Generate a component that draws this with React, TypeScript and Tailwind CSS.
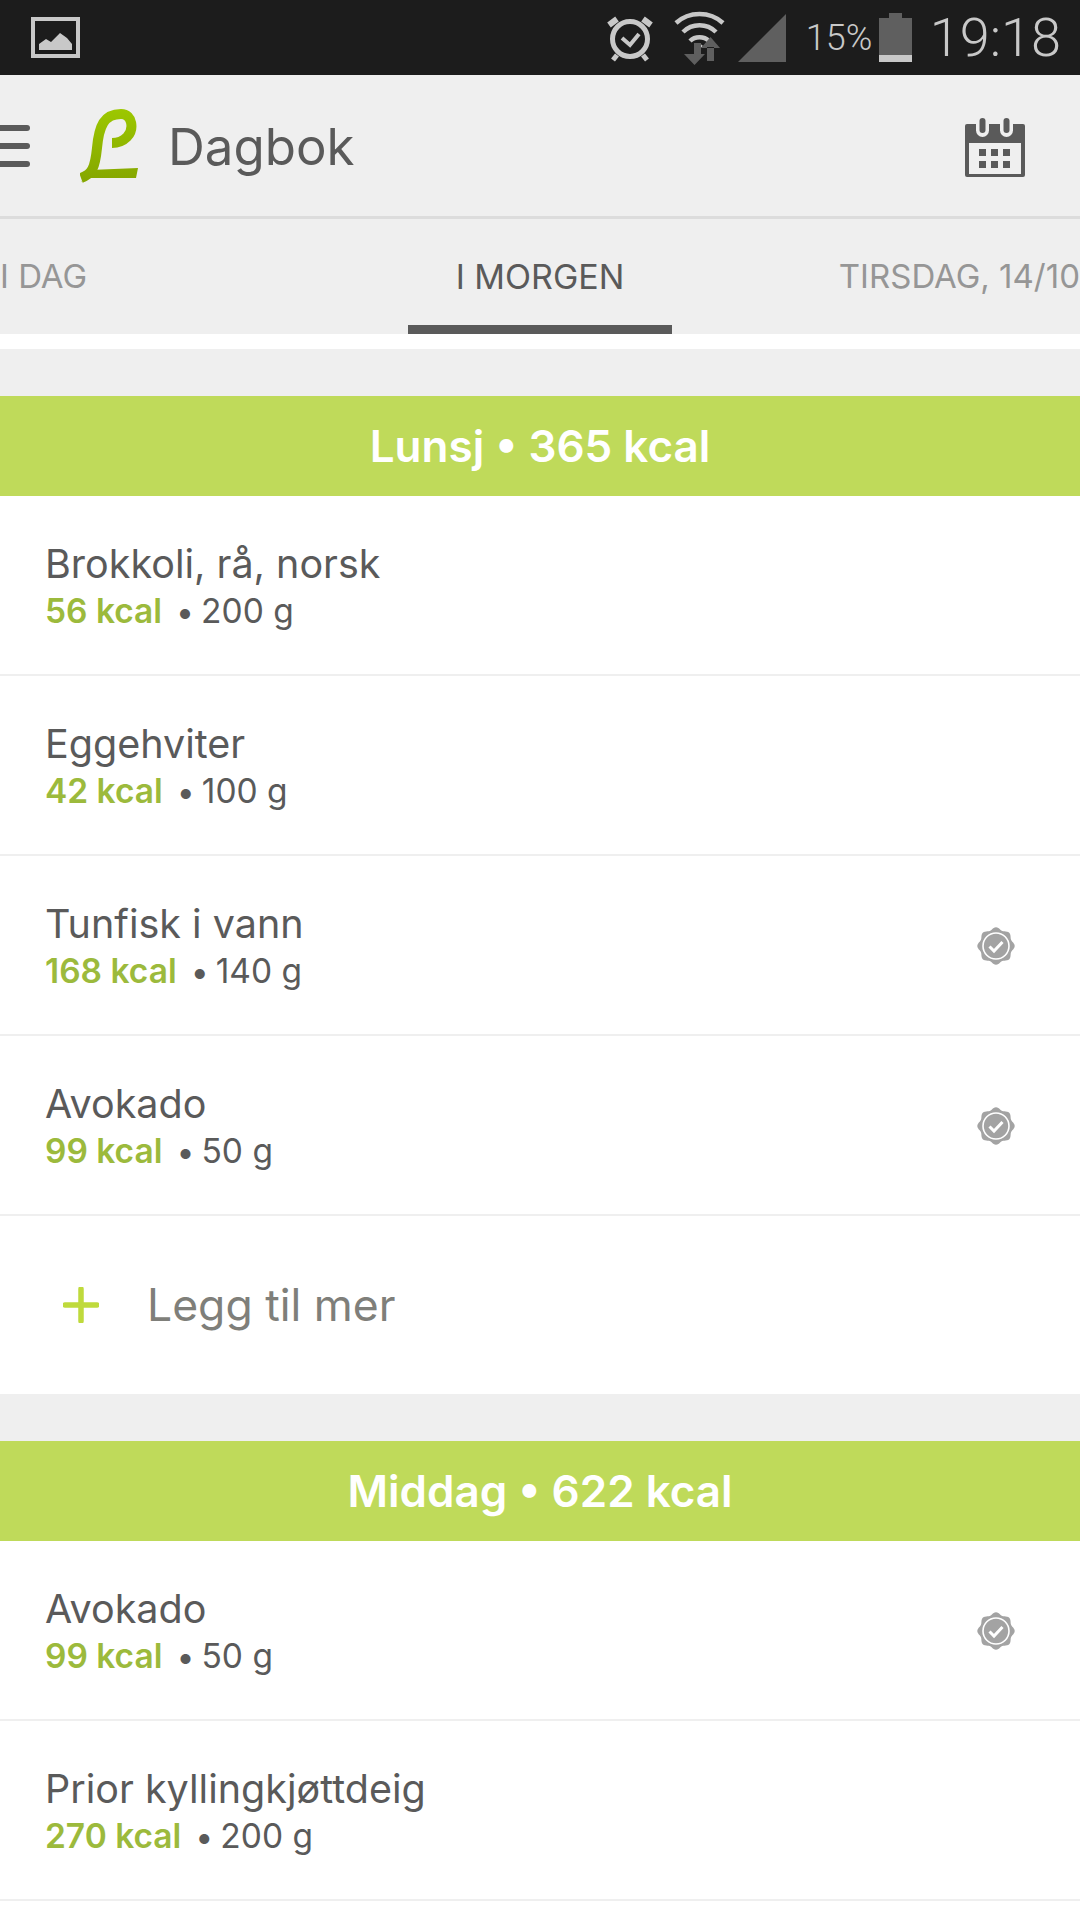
const sans = "font-['Inter','Noto_Sans',sans-serif]";

function StatusIcons() {
  return (
    <div className="flex items-center">
      {/* alarm */}
      <svg width="50" height="52" viewBox="0 0 50 52" className="mr-[18px]">
        <g fill="none" stroke="#c8c8c8">
          <circle cx="24" cy="27" r="17.5" strokeWidth="5" />
          <path d="M3 13L11 7M37 7l8 6" strokeWidth="6" />
          <path d="M11 43l-4 5M37 43l4 5" strokeWidth="5" />
          <path d="M16 26l8 7 9-11" strokeWidth="4" />
        </g>
      </svg>
      {/* wifi with transfer arrows */}
      <svg width="52" height="54" viewBox="0 0 52 54" className="mr-[12px]">
        <g fill="none" stroke="#c8c8c8" strokeWidth="4.5">
          <path d="M2 12C15 0 36 0 49 12" />
          <path d="M9 21C18 12 33 12 42 21" />
          <path d="M16 30C21 25 30 25 35 30" />
        </g>
        <path d="M22 35l3.5-3 3.5 3-3.5 3z" fill="#c8c8c8" />
        <path d="M17 44h6v-12h7v12h-1zM13 43h21l-10.500 11z" fill="#5f5f5f" transform="translate(-3 0)" />
        <path d="M33 50V36h7v14zM27 37h19L36.500 26z" fill="#5f5f5f" />
      </svg>
      {/* signal */}
      <svg width="48" height="48" viewBox="0 0 48 48" className="mr-[20px]">
        <path d="M48 0v48H0z" fill="#5f5f5f" />
      </svg>
      <span className="font-['Roboto',sans-serif] text-[36px] leading-none font-light text-[#c8c8c8] mr-[9px] w-[64px]">15%</span>
      {/* battery */}
      <svg width="33" height="49" viewBox="0 0 33 49" className="mr-[18px]">
        <path d="M10 0h13v5h10v44H0V5h10z" fill="#5f5f5f" />
        <rect y="42" width="33" height="7" fill="#c8c8c8" />
      </svg>
      <span className="font-['Roboto',sans-serif] text-[54px] leading-none font-light text-[#c8c8c8]">19:18</span>
    </div>
  );
}

function Logo() {
  return (
    <svg width="60" height="76" viewBox="0 0 60 76">
      <defs>
        <linearGradient id="logoFill" x1="0" y1="0" x2="0" y2="76" gradientUnits="userSpaceOnUse">
          <stop offset="0" stopColor="#9dc800" />
          <stop offset="1" stopColor="#84a500" />
        </linearGradient>
      </defs>
      <path
        d="M1 70C12 66 15 60 17 40C19 18 24 6 41 6C53 6 54 22 47 29C42 34 37 35 32 35"
        fill="none"
        stroke="url(#logoFill)"
        strokeWidth="10"
      />
      <path d="M10 62L58 60L56 70L6 70L1 74Z" fill="url(#logoFill)" />
    </svg>
  );
}

function CalendarIcon() {
  return (
    <svg width="60" height="60" viewBox="0 0 60 60">
      <path d="M2 6h56a2 2 0 0 1 2 2v49a2 2 0 0 1-2 2H2a2 2 0 0 1-2-2V8a2 2 0 0 1 2-2z" fill="#5a5a5a" />
      <rect x="4" y="25" width="52" height="31" fill="#efefef" />
      <rect x="11" y="-1" width="13" height="20" rx="6.5" fill="#efefef" />
      <rect x="35" y="-1" width="13" height="20" rx="6.5" fill="#efefef" />
      <rect x="14.5" y="0" width="6" height="15" rx="3" fill="#5a5a5a" />
      <rect x="38.5" y="0" width="6" height="15" rx="3" fill="#5a5a5a" />
      {[14, 26, 38].map((x) =>
        [31, 43].map((y) => <rect key={`${x}-${y}`} x={x} y={y} width="7" height="7" fill="#5a5a5a" />),
      )}
    </svg>
  );
}

// Scalloped seal outline with eight soft lobes around the centre.
function sealPath(cx: number, cy: number, r: number, amp: number) {
  const pts: string[] = [];
  for (let i = 0; i < 96; i++) {
    const a = (i / 96) * Math.PI * 2;
    const rad = r + amp * Math.cos(8 * a);
    pts.push(`${(cx + rad * Math.cos(a)).toFixed(2)} ${(cy + rad * Math.sin(a)).toFixed(2)}`);
  }
  return `M${pts.join("L")}Z`;
}

function Verified() {
  return (
    <svg width="38" height="38" viewBox="0 0 38 38" className="mt-[1px]">
      <path d={sealPath(19, 19, 17.5, 1.2)} fill="#a3a3a3" />
      <circle cx="19" cy="19" r="13" fill="none" stroke="#ffffff" strokeWidth="1.6" />
      <path d="M12.5 19.5l4.5 4.500 8.500-9" fill="none" stroke="#ffffff" strokeWidth="3" />
    </svg>
  );
}

function Banner({ children }: { children: React.ReactNode }) {
  return (
    <div className={`h-[100px] bg-[#bfda5a] flex items-center justify-center text-white text-[44px] font-semibold ${sans}`}>
      {children}
    </div>
  );
}

function FoodRow({ name, kcal, amount, verified }: { name: string; kcal: string; amount: string; verified?: boolean }) {
  return (
    <div className={`h-[180px] shrink-0 bg-white border-b-2 border-[#efefef] flex items-center pl-[45px] pr-[65px] ${sans}`}>
      <div className="flex-1 flex flex-col pt-[6px]">
        <div className="text-[39.5px] leading-[46px] text-[#5a5a5a]">{name}</div>
        <div className="flex items-baseline mt-[1px] text-[33.5px] leading-[46px] text-[#5a5a5a] whitespace-pre">
          <span className="font-semibold text-[#9cba3c]">{kcal}</span>
          <span className="ml-[14px] text-[32px]">•</span>
          <span className="ml-[7px]">{amount}</span>
        </div>
      </div>
      {verified && <Verified />}
    </div>
  );
}

const lunch = [
  { name: "Brokkoli, rå, norsk", kcal: "56 kcal", amount: "200 g" },
  { name: "Eggehviter", kcal: "42 kcal", amount: "100 g" },
  { name: "Tunfisk i vann", kcal: "168 kcal", amount: "140 g", verified: true },
  { name: "Avokado", kcal: "99 kcal", amount: "50 g", verified: true },
];

const dinner = [
  { name: "Avokado", kcal: "99 kcal", amount: "50 g", verified: true },
  { name: "Prior kyllingkjøttdeig", kcal: "270 kcal", amount: "200 g" },
];

export default function App() {
  return (
    <div className="w-[1080px] h-[1920px] overflow-hidden bg-white flex flex-col">
      <div className="h-[75px] shrink-0 bg-[#1c1c1c] flex items-center justify-between pl-[31px] pr-[19px]">
        <svg width="49" height="41" viewBox="0 0 49 41">
          <rect x="2" y="2" width="45" height="37" fill="none" stroke="#c8c8c8" strokeWidth="4" />
          <path d="M8 33v-6l7-5 5 3 9-9 7 5 5 6v6z" fill="#c8c8c8" />
        </svg>
        <StatusIcons />
      </div>

      <header className="h-[144px] shrink-0 bg-[#efefef] border-b-[3px] border-[#dcdcdc] flex items-center">
        <div className="w-[30px] flex flex-col gap-[12px] mr-[50px]">
          <div className="h-[6px] bg-[#5a5a5a] rounded-r-full" />
          <div className="h-[6px] bg-[#5a5a5a] rounded-r-full" />
          <div className="h-[6px] bg-[#5a5a5a] rounded-r-full" />
        </div>
        <Logo />
        <span className={`ml-[28px] mt-[3px] text-[51px] text-[#5a5a5a] ${sans}`}>Dagbok</span>
        <div className="ml-auto mr-[55px] mt-[4px]">
          <CalendarIcon />
        </div>
      </header>

      <nav className={`h-[115px] shrink-0 bg-[#efefef] grid grid-cols-3 text-[33px] ${sans}`}>
        <div className="flex items-center text-[#969696]">I DAG</div>
        <div className="relative flex items-center justify-center text-[34px] text-[#5a5a5a]">
          I MORGEN
          <div className="absolute bottom-0 left-[48px] right-[48px] h-[9px] bg-[#5a5a5a]" />
        </div>
        <div className="flex items-center justify-end text-[#969696] whitespace-nowrap">TIRSDAG, 14/10</div>
      </nav>

      <div className="h-[15px] shrink-0 bg-white" />
      <div className="h-[47px] shrink-0 bg-[#efefef]" />
      <Banner>Lunsj • 365 kcal</Banner>
      {lunch.map((item) => (
        <FoodRow key={item.name} {...item} />
      ))}
      <div className={`h-[178px] shrink-0 bg-white flex items-center pl-[63px] ${sans}`}>
        <svg width="36" height="36" viewBox="0 0 36 36">
          <path d="M18 2v32M2 18h32" stroke="#bfda3c" strokeWidth="5.5" strokeLinecap="round" />
        </svg>
        <span className="ml-[48px] text-[44.5px] text-[#7f7f7a]">Legg til mer</span>
      </div>
      <div className="h-[47px] shrink-0 bg-[#efefef]" />
      <Banner>Middag • 622 kcal</Banner>
      {dinner.map((item) => (
        <FoodRow key={item.name} {...item} />
      ))}
    </div>
  );
}
